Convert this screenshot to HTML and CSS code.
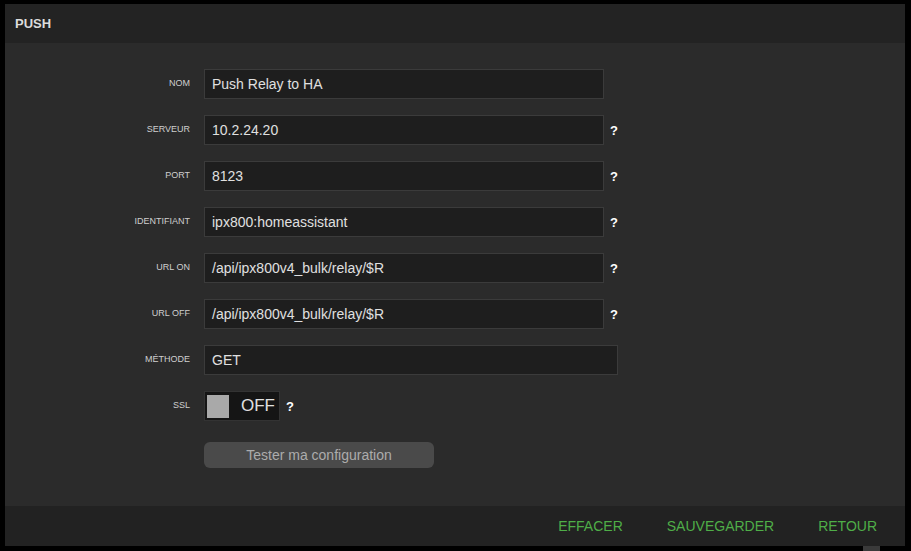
FILE: index.html
```html
<!DOCTYPE html>
<html lang="fr">
<head>
<meta charset="utf-8">
<link rel="stylesheet" href="styles.css">
</head>
<body>
<div class="panel">
  <div class="header">PUSH</div>
  <div class="body">
    <form class="form">
      <label class="lbl">NOM</label>
      <div class="field"><div class="input">Push Relay to HA</div></div>
      <label class="lbl">SERVEUR</label>
      <div class="field"><div class="input">10.2.24.20</div><span class="help">?</span></div>
      <label class="lbl">PORT</label>
      <div class="field"><div class="input">8123</div><span class="help">?</span></div>
      <label class="lbl">IDENTIFIANT</label>
      <div class="field"><div class="input">ipx800:homeassistant</div><span class="help">?</span></div>
      <label class="lbl">URL ON</label>
      <div class="field"><div class="input">/api/ipx800v4_bulk/relay/$R</div><span class="help">?</span></div>
      <label class="lbl">URL OFF</label>
      <div class="field"><div class="input">/api/ipx800v4_bulk/relay/$R</div><span class="help">?</span></div>
      <label class="lbl">MÉTHODE</label>
      <div class="field"><div class="input wide">GET</div></div>
      <label class="lbl">SSL</label>
      <div class="field"><div class="toggle"><span class="knob"></span><span class="state">OFF</span></div><span class="help">?</span></div>
      <span></span>
      <div class="field btnrow"><div class="btn">Tester ma configuration</div></div>
    </form>
  </div>
  <div class="footer">
    <a class="link">EFFACER</a>
    <a class="link">SAUVEGARDER</a>
    <a class="link">RETOUR</a>
  </div>
</div>
<div class="bottom"><span class="scroll"></span></div>
</body>
</html>
```
FILE: styles.css
```css
html, body {
  margin: 0;
  padding: 0;
  background: #000;
  font-family: "Liberation Sans", Arial, sans-serif;
}
body {
  width: 911px;
  height: 551px;
  overflow: hidden;
}
.panel {
  margin: 4px 6px 0 5px;
  width: 900px;
}
.header {
  height: 39px;
  background: #232323;
  color: #dcdcdc;
  font-weight: bold;
  font-size: 13px;
  line-height: 39px;
  padding-left: 10px;
}
.body {
  background: #2b2b2b;
  height: 463px;
  box-sizing: border-box;
  padding-top: 26px;
}
.form {
  display: grid;
  grid-template-columns: 185px 1fr;
  column-gap: 14px;
  row-gap: 16px;
  margin: 0;
}
.lbl {
  font-size: 9px;
  color: #cfcfcf;
  text-align: right;
  align-self: center;
  margin-top: -2px;
}
.field {
  display: flex;
  align-items: center;
  height: 30px;
}
.input {
  width: 400px;
  height: 30px;
  box-sizing: border-box;
  background: #1e1e1e;
  border: 1px solid #3b3b3b;
  color: #e0e0e0;
  font-size: 14px;
  line-height: 28px;
  padding-left: 7px;
}
.input.wide {
  width: 414px;
}
.help {
  color: #fff;
  font-weight: bold;
  font-size: 13px;
  margin-left: 6px;
}
.toggle {
  width: 76px;
  height: 30px;
  box-sizing: border-box;
  background: #151515;
  border: 1px solid #333;
  display: flex;
  align-items: center;
  padding-left: 2px;
}
.knob {
  width: 22px;
  height: 23px;
  background: #a9a9a9;
}
.state {
  color: #e0e0e0;
  font-size: 17px;
  margin-left: 12px;
}
.btnrow {
  margin-top: 5px;
  height: 26px;
}
.btn {
  width: 230px;
  height: 26px;
  border-radius: 6px;
  background: #4a4a4a;
  color: #acacac;
  font-size: 14px;
  line-height: 26px;
  text-align: center;
}
.footer {
  height: 40px;
  background: #222;
  display: flex;
  justify-content: flex-end;
  align-items: center;
  gap: 44px;
  padding-right: 28px;
}
.link {
  color: #4fae48;
  font-size: 14px;
}
.bottom {
  position: relative;
  height: 5px;
}
.scroll {
  position: absolute;
  left: 863px;
  top: 0;
  width: 17px;
  height: 5px;
  background: #3a3a3a;
}
```
